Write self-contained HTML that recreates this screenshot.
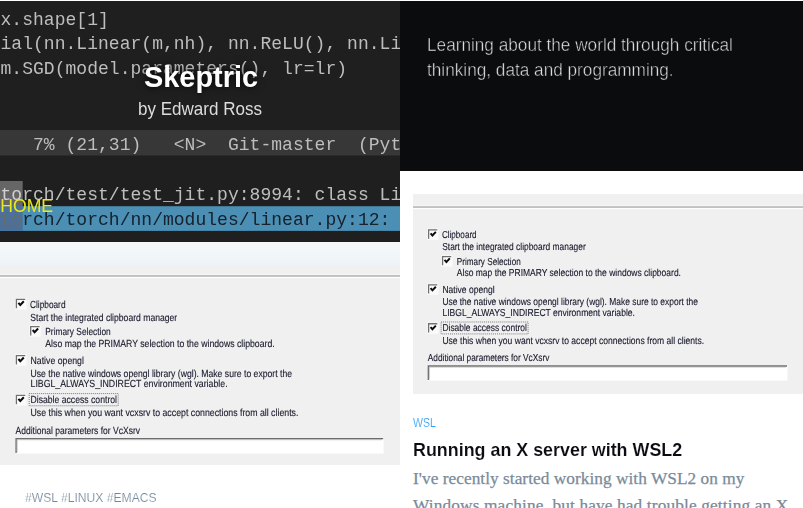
<!DOCTYPE html>
<html lang="en">
<head>
<meta charset="utf-8">
<title>Skeptric</title>
<style>
*{box-sizing:border-box;margin:0;padding:0}
html,body{width:803px;height:508px;overflow:hidden;background:#fff}
body{position:relative;font-family:"Liberation Sans",sans-serif;-webkit-font-smoothing:antialiased}
svg{display:block}
a{text-decoration:none;color:inherit}
.hero{position:absolute;left:0;top:0;width:400px;height:242px;overflow:hidden;background:#1f1f1f}
.hero-img{position:absolute;left:0;top:0;will-change:transform}
.site-title{position:absolute;left:1px;width:400px;top:56.6px;text-align:center;font-weight:bold;font-size:29.3px;line-height:40px;color:#fff;white-space:nowrap;transform:scaleX(0.986);text-shadow:0 0 9px rgba(0,0,0,0.75),0 0 4px rgba(0,0,0,0.5)}
.site-sub{position:absolute;left:0px;width:400px;top:97px;text-align:center;font-size:18.2px;line-height:24px;color:#dcdcdc;white-space:nowrap;transform:scaleX(0.937)}
.nav{position:absolute;left:0.3px;top:195.2px;font-size:17.6px;line-height:22px;color:#e9e91c;white-space:nowrap;letter-spacing:-0.02px}
.desc{position:absolute;left:400px;top:0;width:403px;height:171px;background:#0b0c0e;color:#e0e0e0}
.desc p{position:absolute;left:27px;top:33.2px;font-size:17.8px;line-height:25px;white-space:nowrap;-webkit-text-stroke:0.45px #0b0c0e;transform:scaleX(0.967);transform-origin:0 0}
.feature{position:absolute;left:0;top:242px;width:400px;height:223px;overflow:hidden}
.topline{position:absolute;left:0;top:0;width:803px;height:1px;background:#fff;z-index:5}
.tags{position:absolute;left:25px;top:487.5px;font-size:13.2px;line-height:20px;color:#72879c;white-space:nowrap;transform:scaleX(0.919);transform-origin:0 0;-webkit-text-stroke:0.18px #fff}
.card-img{position:absolute;left:413px;top:194px;width:390px;height:200px;overflow:hidden}
.cat{position:absolute;left:413px;top:413.4px;font-size:13.2px;line-height:20px;color:#2f9ff5;white-space:nowrap;transform:scaleX(0.80);transform-origin:0 0;-webkit-text-stroke:0.15px #fff}
.card-title{position:absolute;left:413.3px;top:436.5px;font-size:18.4px;line-height:26px;font-weight:bold;color:#0b0b12;white-space:nowrap;transform:scaleX(0.972);transform-origin:0 0;-webkit-text-stroke:0.12px #fff}
.card-body{position:absolute;left:413px;top:466px;width:390px;font-family:"Liberation Serif",serif;font-size:17.3px;line-height:26.5px;color:#7a8a99;white-space:nowrap;-webkit-text-stroke:0.25px #7a8a99}
.card-body span{display:block}
.card-body .l1{letter-spacing:0.04px}
.card-body .l2{letter-spacing:0.14px}
</style>
</head>
<body>
<div class="topline"></div>
<header class="hero">
<svg class="hero-img" width="400" height="242" viewBox="0 0 400 242">
<defs><linearGradient id="rowA" gradientUnits="userSpaceOnUse" x1="0" y1="0" x2="400" y2="0"><stop offset="0.0567" stop-color="#d0d0d0"/><stop offset="0.0567" stop-color="#bdbdbd"/></linearGradient><linearGradient id="rowB" gradientUnits="userSpaceOnUse" x1="0" y1="0" x2="400" y2="0"><stop offset="0.0567" stop-color="#6a6a6a"/><stop offset="0.0567" stop-color="#16222c"/></linearGradient></defs>
<rect width="400" height="242" fill="#1f1f1f"/>
<rect x="0" y="130" width="400" height="25.5" fill="#373737"/>
<rect x="0" y="206.2" width="400" height="24.7" fill="#4b8fb5"/>
<rect x="0" y="181" width="22.7" height="25" fill="#666666"/>
<rect x="0" y="206.2" width="22.7" height="24.7" fill="#4b7099"/>
<g font-family="'Liberation Mono', monospace" font-size="18" style="white-space:pre">
<text x="0.50" y="25" fill="#bdbdbd" textLength="108.30" lengthAdjust="spacing" xml:space="preserve">x.shape[1]</text>
<text x="0.50" y="49" fill="#bdbdbd" textLength="400.71" lengthAdjust="spacing" xml:space="preserve">ial(nn.Linear(m,nh), nn.ReLU(), nn.Li</text>
<text x="0.50" y="74" fill="#bdbdbd" textLength="346.56" lengthAdjust="spacing" xml:space="preserve">m.SGD(model.parameters(), lr=lr)</text>
<text x="0.50" y="149.5" fill="#bdbdbd" textLength="400.71" lengthAdjust="spacing" xml:space="preserve">   7% (21,31)   &lt;N&gt;  Git-master  (Pyt</text>
<text x="0.50" y="200" fill="url(#rowA)" textLength="400.71" lengthAdjust="spacing" xml:space="preserve">torch/test/test_jit.py:8994: class Li</text>
<text x="0.50" y="224.8" fill="url(#rowB)" textLength="389.88" lengthAdjust="spacing" xml:space="preserve">torch/torch/nn/modules/linear.py:12:</text>
</g></svg>
<h1 class="site-title"><a>Skeptric</a></h1>
<p class="site-sub">by Edward Ross</p>
<nav class="nav"><a>HOME</a></nav>
</header>
<section class="desc"><p>Learning about the world through critical<br>thinking, data and programming.</p></section>
<main>
<article>
<div class="feature">
<svg class="imgL" width="400" height="223" viewBox="0 0 400 223">
<defs><linearGradient id="g-imgL" x1="0" y1="0" x2="0" y2="1"><stop offset="0" stop-color="#f5f9fc"/><stop offset="1" stop-color="#eef3f7"/></linearGradient></defs>
<rect y="0" width="400" height="223" fill="#f0f0f0"/>
<g transform="translate(0 -242) scale(1)">
<rect x="0" y="242" width="400" height="23" fill="url(#g-imgL)"/>
<rect x="-2" y="274" width="406" height="1" fill="#f7f7f7"/>
<rect x="-2" y="275" width="406" height="1.9" fill="#c0c0c0"/>
<rect x="-2" y="277" width="406" height="1.1" fill="#ffffff"/>
<filter id="b-imgL" x="-5%" y="-5%" width="110%" height="110%"><feGaussianBlur stdDeviation="0.3"/></filter>
<g font-family="'Liberation Sans', sans-serif" text-rendering="geometricPrecision" filter="url(#b-imgL)">
<g transform="translate(16 299)"><rect x="-0.9" y="-1" width="11.4" height="11.6" fill="#fbfbfb"/><path d="M0.4 9.3V0.4H9.3" fill="none" stroke="#707070" stroke-width="1.3"/><path d="M2.4 3.8L4.3 6L7.8 2.3" fill="none" stroke="#0a0a0a" stroke-width="2"/></g>
<text x="30" y="307.6" font-size="10.3" fill="#18182a" stroke="#18182a" stroke-width="0.12" textLength="35.5" lengthAdjust="spacingAndGlyphs">Clipboard</text>
<text x="30.3" y="320.7" font-size="10.3" fill="#18182a" stroke="#18182a" stroke-width="0.12" textLength="146.9" lengthAdjust="spacingAndGlyphs">Start the integrated clipboard manager</text>
<g transform="translate(30.3 326.2)"><rect x="-0.9" y="-1" width="11.4" height="11.6" fill="#fbfbfb"/><path d="M0.4 9.3V0.4H9.3" fill="none" stroke="#707070" stroke-width="1.3"/><path d="M2.4 3.8L4.3 6L7.8 2.3" fill="none" stroke="#0a0a0a" stroke-width="2"/></g>
<text x="45.3" y="334.8" font-size="10.3" fill="#18182a" stroke="#18182a" stroke-width="0.12" textLength="65.4" lengthAdjust="spacingAndGlyphs">Primary Selection</text>
<text x="45.3" y="346.8" font-size="10.3" fill="#18182a" stroke="#18182a" stroke-width="0.12" textLength="229.4" lengthAdjust="spacingAndGlyphs">Also map the PRIMARY selection to the windows clipboard.</text>
<g transform="translate(16 355.2)"><rect x="-0.9" y="-1" width="11.4" height="11.6" fill="#fbfbfb"/><path d="M0.4 9.3V0.4H9.3" fill="none" stroke="#707070" stroke-width="1.3"/><path d="M2.4 3.8L4.3 6L7.8 2.3" fill="none" stroke="#0a0a0a" stroke-width="2"/></g>
<text x="30.5" y="364.4" font-size="10.3" fill="#18182a" stroke="#18182a" stroke-width="0.12" textLength="53.4" lengthAdjust="spacingAndGlyphs">Native opengl</text>
<text x="30.5" y="377.0" font-size="10.3" fill="#18182a" stroke="#18182a" stroke-width="0.12" textLength="261.5" lengthAdjust="spacingAndGlyphs">Use the native windows opengl library (wgl). Make sure to export the</text>
<text x="30.5" y="387.2" font-size="10.3" fill="#18182a" stroke="#18182a" stroke-width="0.12" textLength="197.1" lengthAdjust="spacingAndGlyphs">LIBGL_ALWAYS_INDIRECT environment variable.</text>
<g transform="translate(16 395)"><rect x="-0.9" y="-1" width="11.4" height="11.6" fill="#fbfbfb"/><path d="M0.4 9.3V0.4H9.3" fill="none" stroke="#707070" stroke-width="1.3"/><path d="M2.4 3.8L4.3 6L7.8 2.3" fill="none" stroke="#0a0a0a" stroke-width="2"/></g>
<rect x="29.2" y="393.6" width="89" height="12.2" fill="none" stroke="#444" stroke-width="0.7" stroke-dasharray="1 1"/>
<text x="30.5" y="403.2" font-size="10.3" fill="#18182a" stroke="#18182a" stroke-width="0.12" textLength="86.5" lengthAdjust="spacingAndGlyphs">Disable access control</text>
<text x="30.5" y="416.2" font-size="10.3" fill="#18182a" stroke="#18182a" stroke-width="0.12" textLength="267.9" lengthAdjust="spacingAndGlyphs">Use this when you want vcxsrv to accept connections from all clients.</text>
<text x="15.5" y="433.6" font-size="10.3" fill="#18182a" stroke="#18182a" stroke-width="0.12" textLength="124.5" lengthAdjust="spacingAndGlyphs">Additional parameters for VcXsrv</text>
</g>
<rect x="15.4" y="437.9" width="368.2" height="15.6" fill="#ffffff"/>
<path d="M16.1 453V438.6H383.2" fill="none" stroke="#6c6c6c" stroke-width="1.4"/>
<path d="M17.1 452.3V439.7H382" fill="none" stroke="#a8a8a8" stroke-width="0.7"/>
</g></svg>
</div>
<div class="tags"><a>#WSL</a> <a>#LINUX</a> <a>#EMACS</a></div>
</article>
<article>
<div class="card-img">
<svg class="imgR" width="390" height="200" viewBox="0 0 390 200">
<defs><linearGradient id="g-imgR" x1="0" y1="0" x2="0" y2="1"><stop offset="0" stop-color="#f5f9fc"/><stop offset="1" stop-color="#eef3f7"/></linearGradient></defs>
<rect y="0" width="390" height="200" fill="#f0f0f0"/>
<g transform="translate(-0.4 -256.55) scale(0.977)">
<rect x="-2" y="274" width="406" height="1" fill="#f7f7f7"/>
<rect x="-2" y="275" width="406" height="1.9" fill="#c0c0c0"/>
<rect x="-2" y="277" width="406" height="1.1" fill="#ffffff"/>
<filter id="b-imgR" x="-5%" y="-5%" width="110%" height="110%"><feGaussianBlur stdDeviation="0.3"/></filter>
<g font-family="'Liberation Sans', sans-serif" text-rendering="geometricPrecision" filter="url(#b-imgR)">
<g transform="translate(16 299)"><rect x="-0.9" y="-1" width="11.4" height="11.6" fill="#fbfbfb"/><path d="M0.4 9.3V0.4H9.3" fill="none" stroke="#707070" stroke-width="1.3"/><path d="M2.4 3.8L4.3 6L7.8 2.3" fill="none" stroke="#0a0a0a" stroke-width="2"/></g>
<text x="30" y="307.6" font-size="10.3" fill="#18182a" stroke="#18182a" stroke-width="0.12" textLength="35.5" lengthAdjust="spacingAndGlyphs">Clipboard</text>
<text x="30.3" y="320.2" font-size="10.3" fill="#18182a" stroke="#18182a" stroke-width="0.12" textLength="146.9" lengthAdjust="spacingAndGlyphs">Start the integrated clipboard manager</text>
<g transform="translate(30.3 326.2)"><rect x="-0.9" y="-1" width="11.4" height="11.6" fill="#fbfbfb"/><path d="M0.4 9.3V0.4H9.3" fill="none" stroke="#707070" stroke-width="1.3"/><path d="M2.4 3.8L4.3 6L7.8 2.3" fill="none" stroke="#0a0a0a" stroke-width="2"/></g>
<text x="45.3" y="334.8" font-size="10.3" fill="#18182a" stroke="#18182a" stroke-width="0.12" textLength="65.4" lengthAdjust="spacingAndGlyphs">Primary Selection</text>
<text x="45.3" y="346.8" font-size="10.3" fill="#18182a" stroke="#18182a" stroke-width="0.12" textLength="229.4" lengthAdjust="spacingAndGlyphs">Also map the PRIMARY selection to the windows clipboard.</text>
<g transform="translate(16 355.2)"><rect x="-0.9" y="-1" width="11.4" height="11.6" fill="#fbfbfb"/><path d="M0.4 9.3V0.4H9.3" fill="none" stroke="#707070" stroke-width="1.3"/><path d="M2.4 3.8L4.3 6L7.8 2.3" fill="none" stroke="#0a0a0a" stroke-width="2"/></g>
<text x="30.5" y="364.4" font-size="10.3" fill="#18182a" stroke="#18182a" stroke-width="0.12" textLength="53.4" lengthAdjust="spacingAndGlyphs">Native opengl</text>
<text x="30.5" y="376.2" font-size="10.3" fill="#18182a" stroke="#18182a" stroke-width="0.12" textLength="261.5" lengthAdjust="spacingAndGlyphs">Use the native windows opengl library (wgl). Make sure to export the</text>
<text x="30.5" y="387.2" font-size="10.3" fill="#18182a" stroke="#18182a" stroke-width="0.12" textLength="197.1" lengthAdjust="spacingAndGlyphs">LIBGL_ALWAYS_INDIRECT environment variable.</text>
<g transform="translate(16 395)"><rect x="-0.9" y="-1" width="11.4" height="11.6" fill="#fbfbfb"/><path d="M0.4 9.3V0.4H9.3" fill="none" stroke="#707070" stroke-width="1.3"/><path d="M2.4 3.8L4.3 6L7.8 2.3" fill="none" stroke="#0a0a0a" stroke-width="2"/></g>
<rect x="29.2" y="393.6" width="89" height="12.2" fill="none" stroke="#444" stroke-width="0.7" stroke-dasharray="1 1"/>
<text x="30.5" y="403.2" font-size="10.3" fill="#18182a" stroke="#18182a" stroke-width="0.12" textLength="86.5" lengthAdjust="spacingAndGlyphs">Disable access control</text>
<text x="30.5" y="416.2" font-size="10.3" fill="#18182a" stroke="#18182a" stroke-width="0.12" textLength="267.9" lengthAdjust="spacingAndGlyphs">Use this when you want vcxsrv to accept connections from all clients.</text>
<text x="15.5" y="433.6" font-size="10.3" fill="#18182a" stroke="#18182a" stroke-width="0.12" textLength="124.5" lengthAdjust="spacingAndGlyphs">Additional parameters for VcXsrv</text>
</g>
<rect x="15.4" y="437.9" width="368.2" height="15.6" fill="#ffffff"/>
<path d="M16.1 453V438.6H383.2" fill="none" stroke="#6c6c6c" stroke-width="1.4"/>
<path d="M17.1 452.3V439.7H382" fill="none" stroke="#a8a8a8" stroke-width="0.7"/>
</g></svg>
</div>
<div class="cat"><a>WSL</a></div>
<h2 class="card-title"><a>Running an X server with WSL2</a></h2>
<p class="card-body"><span class="l1">I've recently started working with WSL2 on my</span><span class="l2">Windows machine, but have had trouble getting an X</span></p>
</article>
</main>
</body>
</html>
